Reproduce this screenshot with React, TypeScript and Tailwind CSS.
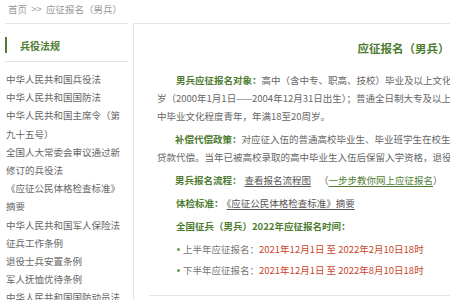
const sideLinks = [
  '中华人民共和国兵役法',
  '中华人民共和国国防法',
  '中华人民共和国主席令（第九十五号）',
  '全国人大常委会审议通过新修订的兵役法',
  '《应征公民体格检查标准》摘要',
  '中华人民共和国军人保险法',
  '征兵工作条例',
  '退役士兵安置条例',
  '军人抚恤优待条例',
  '中华人民共和国国防动员法',
];

const periods = [
  { label: '上半年应征报名：', range: '2021年12月1日 至 2022年2月10日18时' },
  { label: '下半年应征报名：', range: '2021年12月1日 至 2022年8月10日18时' },
];

function Label({ children }: { children: React.ReactNode }) {
  return <span className="font-bold text-[#4e7d31]">{children}</span>;
}

export default function App() {
  return (
    <div
      className="h-[300px] w-[450px] overflow-hidden bg-white text-[9.5px] text-[#666]"
      style={{ fontFamily: '"Noto Sans CJK SC", "Noto Sans", sans-serif' }}
    >
      <div className="h-[23px] px-[8px] pt-[1px] leading-[16px] text-[#999]">
        首页&nbsp;&nbsp;&gt;&gt;&nbsp;&nbsp;应征报名（男兵）
      </div>

      <div className="flex">
        <aside className="w-[128px] shrink-0 pl-[5px]">
          <div className="border-y border-[#e4e4e4] pt-[13px] pb-[8px]">
            <div className="flex h-[16px] items-center">
              <span className="h-[16px] w-[2px] bg-[#4e7d31]" />
              <span className="ml-[13px] text-[10px] font-bold text-[#4e7d31]">兵役法规</span>
            </div>
          </div>
          <ul className="w-[118px] pt-[8px] pl-[1px] leading-[18.2px] text-[#666]">
            {sideLinks.map((t) => (
              <li key={t}>{t}</li>
            ))}
          </ul>
        </aside>

        <main className="ml-[5px] w-[540px] shrink-0 border-t border-l border-[#e4e4e4]">
          <h1 className="pt-[16px] text-center text-[11.5px] leading-[16px] font-bold text-[#4e7d31]">
            应征报名（男兵）
          </h1>

          <div className="mt-[15px] space-y-[5px] pl-[23px] leading-[18px] whitespace-nowrap">
            <p className="indent-[19px]">
              <Label>男兵应征报名对象：</Label>高中（含中专、职高、技校）毕业及以上文化程度男性青年，年满18至22周
              <br />
              岁（2000年1月1日——2004年12月31日出生）；普通全日制大专及以上在校生和应届毕业生，高
              <br />
              中毕业文化程度青年，年满18至20周岁。
            </p>
            <p className="indent-[18px]">
              <Label>补偿代偿政策：</Label>对应征入伍的普通高校毕业生、毕业班学生在校生和新生，给予学费补偿或助学
              <br />
              贷款代偿。当年已被高校录取的高中毕业生入伍后保留入学资格，退役后可以继续入学。
            </p>
            <p className="indent-[18px]">
              <Label>男兵报名流程：</Label>
              <span className="ml-[3px] text-[#555] underline underline-offset-2">查看报名流程图</span>
              <span className="ml-[8px]">（</span>
              <span className="text-[#4e7d31] underline underline-offset-2">一步步教你网上应征报名</span>）
            </p>
            <p className="indent-[19px]">
              <Label>体检标准：</Label>
              <span className="ml-[3px] text-[#555] underline underline-offset-2">《应征公民体格检查标准》摘要</span>
            </p>
            <p className="indent-[19px]">
              <Label>全国征兵（男兵）2022年应征报名时间：</Label>
            </p>
            <ul className="space-y-[3px] pl-[20px]">
              {periods.map((p) => (
                <li key={p.label} className="flex items-center">
                  <span className="mr-[3px] h-[3px] w-[3px] rounded-full bg-[#6a9a4a]" />
                  <span className="text-[#777]">{p.label}</span>
                  <span className="text-[#c9462b]">{p.range}</span>
                </li>
              ))}
            </ul>
          </div>

          <div className="mt-[16px] ml-[15px] border-t border-[#e4e4e4]" />
        </main>
      </div>
    </div>
  );
}
